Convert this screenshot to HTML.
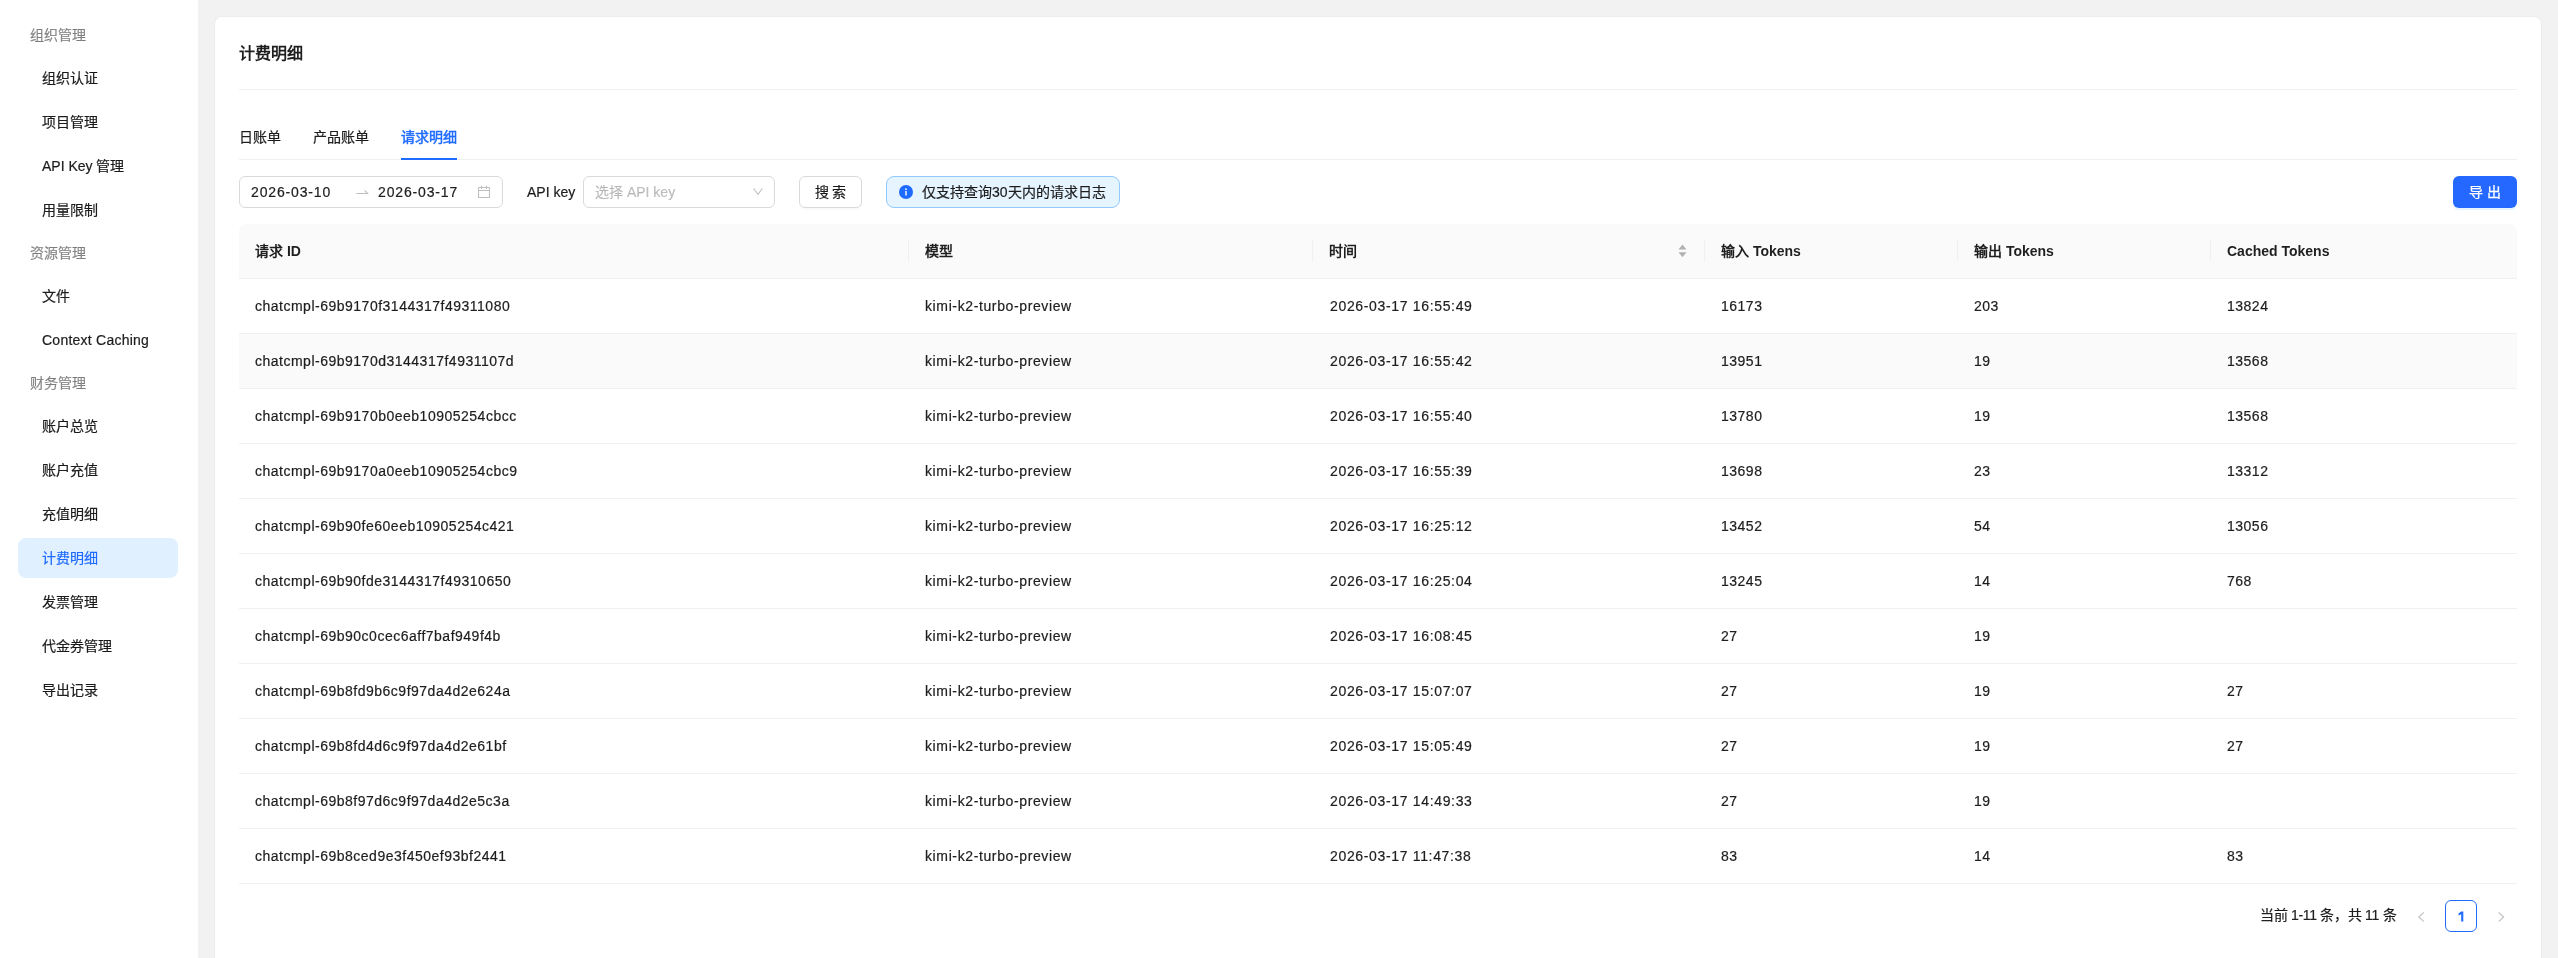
<!DOCTYPE html>
<html lang="zh-CN"><head><meta charset="utf-8">
<style>
*{box-sizing:border-box;margin:0;padding:0}
html,body{width:2558px;height:958px;overflow:hidden;background:#f2f2f2;font-family:"Liberation Sans",sans-serif;font-size:14px;line-height:22px;color:rgba(0,0,0,0.88)}
.abs{position:absolute;white-space:nowrap}
#side{position:absolute;left:0;top:0;width:198px;height:958px;background:#fff}
.grp{position:absolute;left:30px;height:38px;line-height:38px;color:rgba(0,0,0,0.45)}
.item{position:absolute;left:18px;width:160px;height:40px;line-height:40px;padding-left:24px;border-radius:8px;color:rgba(0,0,0,0.88)}
.item.sel{background:#e1f0ff;color:#1f6bff}
#card{position:absolute;left:215px;top:17px;width:2326px;height:1000px;background:#fff;border-radius:7px;box-shadow:0 0 0 1px rgba(0,0,0,0.025)}
.title{position:absolute;left:239px;top:42px;font-size:16px;line-height:24px;font-weight:bold;-webkit-text-stroke:0}
.hline{position:absolute;left:239px;width:2278px;height:1px;background:#f0f0f0}
.tab{position:absolute;top:126px;line-height:22px}
.tab.act{color:#1f6bff;-webkit-text-stroke:0.5px #1f6bff}
.ink{position:absolute;left:401px;top:158px;width:56px;height:2px;background:#1f6bff}
.box{position:absolute;top:176px;height:32px;border:1px solid #d9d9d9;border-radius:6px;background:#fff}
.btn{position:absolute;top:176px;height:32px;line-height:30px;border:1px solid #d9d9d9;border-radius:6px;background:#fff;text-align:center;box-shadow:0 2px 0 rgba(0,0,0,0.02)}
.alert{position:absolute;left:886px;top:176px;width:234px;height:32px;border:1px solid #91caff;background:#e6f4ff;border-radius:8px}
.primary{position:absolute;left:2453px;top:176px;width:64px;height:32px;line-height:32px;-webkit-text-stroke:0.25px #fff;border-radius:6px;background:#2468ff;color:#fff;text-align:center;box-shadow:0 2px 0 rgba(5,145,255,0.1)}
table{position:absolute;left:239px;top:224px;width:2278px;border-collapse:separate;border-spacing:0;table-layout:fixed}
th,td{padding:16px;text-align:left;white-space:nowrap;border-bottom:1px solid #f0f0f0;line-height:22px;font-weight:normal}
th{background:#fafafa;font-weight:bold;position:relative;height:55px;-webkit-text-stroke:0}
td{height:55px}
td.c1{letter-spacing:0.5px}td.c2{letter-spacing:0.62px}td.c3{letter-spacing:0.66px;text-indent:1px}td.c4,td.c5,td.c6{letter-spacing:0.5px}
.dt{letter-spacing:0.85px}
th.sep::before{content:"";position:absolute;left:-1px;top:16px;width:1px;height:22px;background:#f0f0f0}
th:first-child{border-top-left-radius:8px}
th:last-child{border-top-right-radius:8px}
tr.hov td{background:#fafafa}
#root{-webkit-text-stroke:0.2px currentColor;position:absolute;left:0;top:0;width:2558px;height:958px;overflow:hidden;will-change:transform}
</style></head><body><div id="root">
<div id="side">
  <div class="grp" style="top:16px">组织管理</div>
  <div class="item" style="top:58px">组织认证</div>
  <div class="item" style="top:102px">项目管理</div>
  <div class="item" style="top:146px">API Key 管理</div>
  <div class="item" style="top:190px">用量限制</div>
  <div class="grp" style="top:234px">资源管理</div>
  <div class="item" style="top:276px">文件</div>
  <div class="item" style="top:320px;letter-spacing:0.24px">Context Caching</div>
  <div class="grp" style="top:364px">财务管理</div>
  <div class="item" style="top:406px">账户总览</div>
  <div class="item" style="top:450px">账户充值</div>
  <div class="item" style="top:494px">充值明细</div>
  <div class="item sel" style="top:538px">计费明细</div>
  <div class="item" style="top:582px">发票管理</div>
  <div class="item" style="top:626px">代金券管理</div>
  <div class="item" style="top:670px">导出记录</div>
</div>
<div id="card"></div>
<div class="title">计费明细</div>
<div class="hline" style="top:89px"></div>
<div class="tab" style="left:239px">日账单</div>
<div class="tab" style="left:313px">产品账单</div>
<div class="tab act" style="left:401px">请求明细</div>
<div class="hline" style="top:159px"></div>
<div class="ink"></div>

<div class="box" style="left:239px;width:264px">
  <span class="abs dt" style="left:11px;top:4px">2026-03-10</span>
  <svg class="abs" style="left:115px;top:9px" width="14" height="14" viewBox="0 0 14 14"><path d="M1.3 7.5H12.6L9.6 4.3" fill="none" stroke="rgba(0,0,0,0.25)" stroke-width="1.1"/></svg>
  <span class="abs dt" style="left:138px;top:4px">2026-03-17</span>
  <svg class="abs" style="left:237px;top:8px" width="14" height="14" viewBox="0 0 14 14"><path d="M1.5 2.5H12.5V12.5H1.5Z M1.5 5.5H12.5 M4.5 0.8V4 M9.5 0.8V4" fill="none" stroke="rgba(0,0,0,0.25)" stroke-width="1.05"/></svg>
</div>
<div class="abs" style="left:527px;top:181px">API key</div>
<div class="box" style="left:583px;width:192px">
  <span class="abs" style="left:11px;top:4px;color:rgba(0,0,0,0.25)">选择 API key</span>
  <svg class="abs" style="left:169px;top:10px" width="12" height="12" viewBox="0 0 12 12"><path d="M0.6 1.5L5.0 7.4L9.4 1.5" fill="none" stroke="rgba(0,0,0,0.25)" stroke-width="1.1"/></svg>
</div>
<div class="btn" style="left:799px;width:63px">搜 索</div>
<div class="alert">
  <svg class="abs" style="left:12px;top:8px" width="14" height="14" viewBox="0 0 14 14"><circle cx="7" cy="7" r="7" fill="#1f6bff"/><rect x="6.3" y="6" width="1.4" height="4.5" fill="#fff"/><circle cx="7" cy="4.2" r="0.85" fill="#fff"/></svg>
  <span class="abs" style="left:35px;top:4px">仅支持查询30天内的请求日志</span>
</div>
<div class="primary">导 出</div>

<table>
<colgroup><col style="width:670px"><col style="width:404px"><col style="width:392px"><col style="width:253px"><col style="width:253px"><col style="width:306px"></colgroup>
<thead><tr><th>请求 ID</th><th class="sep">模型</th><th class="sep">时间<svg class="abs" style="left:365px;top:20px" width="10" height="14" viewBox="0 0 10 14"><path d="M4.5 0.6L8.5 5.6H0.5Z M4.5 13.3L8.5 8.2H0.5Z" fill="rgba(0,0,0,0.29)"/></svg></th><th class="sep">输入 Tokens</th><th class="sep">输出 Tokens</th><th class="sep">Cached Tokens</th></tr></thead>
<tbody>
<tr><td class="c1">chatcmpl-69b9170f3144317f49311080</td><td class="c2">kimi-k2-turbo-preview</td><td class="c3">2026-03-17 16:55:49</td><td class="c4">16173</td><td class="c5">203</td><td class="c6">13824</td></tr>
<tr class="hov"><td class="c1">chatcmpl-69b9170d3144317f4931107d</td><td class="c2">kimi-k2-turbo-preview</td><td class="c3">2026-03-17 16:55:42</td><td class="c4">13951</td><td class="c5">19</td><td class="c6">13568</td></tr>
<tr><td class="c1">chatcmpl-69b9170b0eeb10905254cbcc</td><td class="c2">kimi-k2-turbo-preview</td><td class="c3">2026-03-17 16:55:40</td><td class="c4">13780</td><td class="c5">19</td><td class="c6">13568</td></tr>
<tr><td class="c1">chatcmpl-69b9170a0eeb10905254cbc9</td><td class="c2">kimi-k2-turbo-preview</td><td class="c3">2026-03-17 16:55:39</td><td class="c4">13698</td><td class="c5">23</td><td class="c6">13312</td></tr>
<tr><td class="c1">chatcmpl-69b90fe60eeb10905254c421</td><td class="c2">kimi-k2-turbo-preview</td><td class="c3">2026-03-17 16:25:12</td><td class="c4">13452</td><td class="c5">54</td><td class="c6">13056</td></tr>
<tr><td class="c1">chatcmpl-69b90fde3144317f49310650</td><td class="c2">kimi-k2-turbo-preview</td><td class="c3">2026-03-17 16:25:04</td><td class="c4">13245</td><td class="c5">14</td><td class="c6">768</td></tr>
<tr><td class="c1">chatcmpl-69b90c0cec6aff7baf949f4b</td><td class="c2">kimi-k2-turbo-preview</td><td class="c3">2026-03-17 16:08:45</td><td class="c4">27</td><td class="c5">19</td><td class="c6"></td></tr>
<tr><td class="c1">chatcmpl-69b8fd9b6c9f97da4d2e624a</td><td class="c2">kimi-k2-turbo-preview</td><td class="c3">2026-03-17 15:07:07</td><td class="c4">27</td><td class="c5">19</td><td class="c6">27</td></tr>
<tr><td class="c1">chatcmpl-69b8fd4d6c9f97da4d2e61bf</td><td class="c2">kimi-k2-turbo-preview</td><td class="c3">2026-03-17 15:05:49</td><td class="c4">27</td><td class="c5">19</td><td class="c6">27</td></tr>
<tr><td class="c1">chatcmpl-69b8f97d6c9f97da4d2e5c3a</td><td class="c2">kimi-k2-turbo-preview</td><td class="c3">2026-03-17 14:49:33</td><td class="c4">27</td><td class="c5">19</td><td class="c6"></td></tr>
<tr><td class="c1">chatcmpl-69b8ced9e3f450ef93bf2441</td><td class="c2">kimi-k2-turbo-preview</td><td class="c3">2026-03-17 11:47:38</td><td class="c4">83</td><td class="c5">14</td><td class="c6">83</td></tr>
</tbody>
</table>

<div class="abs" style="left:2260px;top:904px;letter-spacing:-0.3px">当前 1-11 条，共 11 条</div>
<svg class="abs" style="left:2416px;top:910px" width="10" height="14" viewBox="0 0 10 14"><path d="M7.8 2.3L2.8 7L7.8 11.7" fill="none" stroke="rgba(0,0,0,0.25)" stroke-width="1.1"/></svg>
<div class="abs" style="left:2445px;top:900px;width:32px;height:32px;border:1px solid #1f6bff;border-radius:6px"><svg class="abs" style="left:12px;top:10px" width="6" height="11" viewBox="0 0 6 11"><path d="M3.2 0.6H5.3V10.6H3.2V3.2L0.5 4.6V2.5Z" fill="#1f6bff"/></svg></div>
<svg class="abs" style="left:2496px;top:910px" width="10" height="14" viewBox="0 0 10 14"><path d="M2.7 2.3L7.7 7L2.7 11.7" fill="none" stroke="rgba(0,0,0,0.25)" stroke-width="1.1"/></svg>
</div></body></html>
